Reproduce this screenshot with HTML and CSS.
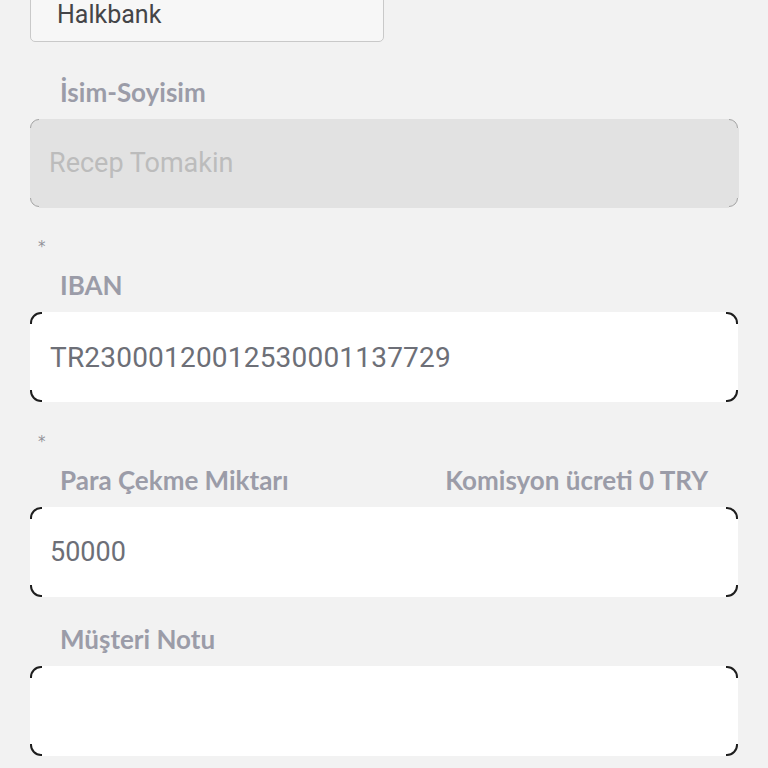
FILE: index.html
```html
<!DOCTYPE html>
<html lang="tr">
<head>
<meta charset="utf-8">
<link rel="stylesheet" href="styles.css">
</head>
<body>
<div class="form">
  <div class="select-box"><span>Halkbank</span></div>

  <div class="label label-first">İsim-Soyisim</div>
  <div class="field field-disabled"><span class="value">Recep Tomakin</span></div>

  <div class="star">*</div>
  <div class="label">IBAN</div>
  <div class="field"><span class="value value-iban">TR23000120012530001137729</span></div>

  <div class="star">*</div>
  <div class="label label-row"><span>Para Çekme Miktarı</span><span>Komisyon ücreti 0 TRY</span></div>
  <div class="field"><span class="value value-amount">50000</span></div>

  <div class="label label-plain">Müşteri Notu</div>
  <div class="field"><span class="value"></span></div>
</div>
</body>
</html>
```
FILE: styles.css
```css
html, body {
  margin: 0;
  padding: 0;
  background: #f2f2f2;
}
body {
  font-family: Roboto, "Liberation Sans", sans-serif;
  width: 768px;
  height: 768px;
  overflow: hidden;
}
.form {
  padding: 0 30px;
}
.select-box {
  width: 354px;
  height: 56px;
  margin-top: -14px;
  box-sizing: border-box;
  border: 1px solid #c9c9c9;
  border-radius: 5px;
  background: #f7f7f7;
  display: flex;
  align-items: center;
  padding-left: 26px;
  font-size: 25px;
  color: #444548;
}
.label {
  font-family: Lato, "Open Sans", sans-serif;
  font-weight: 700;
  font-size: 26px;
  line-height: 30px;
  color: #9b9ca8;
  padding: 0 30px;
  margin-bottom: 12px;
}
.label-first {
  margin-top: 35px;
}
.label-plain {
  margin-top: 27px;
}
.label-row {
  display: flex;
  justify-content: space-between;
}
.star {
  font-family: "DejaVu Sans", sans-serif;
  font-size: 15px;
  line-height: 20px;
  color: #929299;
  padding-left: 8px;
  margin-top: 30px;
  margin-bottom: 13px;
}
.field {
  position: relative;
  height: 90px;
  box-sizing: border-box;
  border: 2px solid #1e1e1e;
  border-radius: 11px;
  background: #ffffff;
  display: flex;
  align-items: center;
  padding-left: 18px;
  font-size: 28px;
  color: #6d6f77;
}
.field::before,
.field::after {
  content: "";
  position: absolute;
  background: #ffffff;
  z-index: 0;
}
.field::before {
  top: -2px;
  bottom: -2px;
  left: 10px;
  right: 10px;
}
.field::after {
  top: 10px;
  bottom: 10px;
  left: -2px;
  right: -2px;
}
.value {
  position: relative;
  z-index: 1;
}
.value-iban {
  letter-spacing: 0.2px;
}
.value-amount {
  font-size: 27px;
}
.field-disabled {
  height: 88px;
  border: 1.5px solid #a3a3a3;
  border-radius: 9px;
  background: #e2e2e2;
  font-size: 27px;
  color: #bcbcbc;
}
.field-disabled::before,
.field-disabled::after {
  background: #e2e2e2;
}
.field-disabled::before {
  top: -1.5px;
  bottom: -1.5px;
  left: 8px;
  right: 8px;
}
.field-disabled::after {
  top: 8px;
  bottom: 8px;
  left: -1.5px;
  right: -1.5px;
}
```
